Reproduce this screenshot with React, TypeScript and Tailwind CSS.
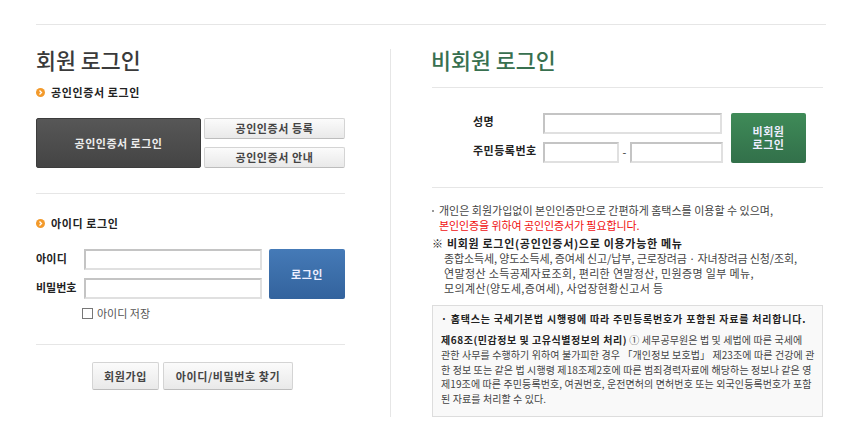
const inputCls = "border-2 border-[#e0e0e0] border-t-[#c4c4c4] border-l-[#c4c4c4] bg-white h-[21px] box-border";

function Bullet() {
  return (
    <svg width="9" height="9" viewBox="0 0 9 9" className="shrink-0">
      <circle cx="4.5" cy="4.5" r="4.5" fill="#f39a2b" />
      <path d="M3.5 2.5 L5.5 4.5 L3.5 6.5" fill="none" stroke="#fff" strokeWidth="1.3" />
    </svg>
  );
}

function SmallBtn({ children, w, h }: { children: React.ReactNode; w: string; h: string }) {
  return (
    <button className={`${w} ${h} flex items-center justify-center rounded-[2px] border border-[#d4d4d4] border-b-[#bdbdbd] bg-gradient-to-b from-[#fbfbfb] to-[#e9e9e9] text-[11px] font-bold tracking-[0.6px] text-[#444]`}>
      {children}
    </button>
  );
}

export default function App() {
  return (
    <div className="h-[434px] w-[850px] overflow-hidden bg-white pt-[24px] pl-[36px] text-[#333]" style={{ fontFamily: '"Noto Sans CJK KR", "Liberation Sans", sans-serif' }}>
      <div className="h-px w-[790px] bg-[#e6e6e6]" />
      <div className="mt-[24px] flex">
        {/* left */}
        <div className="w-[309px]">
          <h1 className="h-[23px] text-[21.7px] leading-[21px] font-medium text-[#3a3a3a]">회원 로그인</h1>
          <div className="mt-[10px] flex h-[20px] items-center gap-[6px] text-[11px] font-bold tracking-[0.6px] text-[#222]">
            <Bullet />공인인증서 로그인
          </div>
          <div className="mt-[16px] flex justify-between">
            <button className="flex h-[50px] w-[165px] items-center justify-center rounded-[2px] border border-[#3c3c3c] bg-gradient-to-b from-[#575757] to-[#444] text-[11px] font-bold tracking-[0.5px] text-[#eee]">
              공인인증서 로그인
            </button>
            <div className="flex w-[141px] flex-col gap-[8px]">
              <SmallBtn w="w-[141px]" h="h-[21px]">공인인증서 등록</SmallBtn>
              <SmallBtn w="w-[141px]" h="h-[21px]">공인인증서 안내</SmallBtn>
            </div>
          </div>
          <div className="mt-[25px] h-px bg-[#e6e6e6]" />
          <div className="mt-[19px] flex h-[20px] items-center gap-[6px] text-[11px] font-bold tracking-[0.6px] text-[#222]">
            <Bullet />아이디 로그인
          </div>
          <div className="mt-[16px] flex justify-between">
            <div className="flex flex-col gap-[8px]">
              <div className="flex items-center">
                <span className="w-[48px] pb-[3px] text-[11px] font-bold tracking-[0.2px] text-[#222]">아이디</span>
                <div className={`${inputCls} w-[178px]`} />
              </div>
              <div className="flex items-center">
                <span className="w-[48px] pb-[3px] text-[11px] font-bold text-[#222]">비밀번호</span>
                <div className={`${inputCls} w-[178px]`} />
              </div>
            </div>
            <button className="flex h-[50px] w-[76px] items-center justify-center rounded-[2px] bg-gradient-to-b from-[#457ab7] to-[#33639d] text-[11px] font-bold tracking-[0.5px] text-[#eef]">
              로그인
            </button>
          </div>
          <div className="mt-[7px] ml-[46px] flex h-[14px] items-center gap-[4px] text-[11px] text-[#555]">
            <span className="h-[11px] w-[11px] border border-[#777] bg-white" />아이디 저장
          </div>
          <div className="mt-[24px] h-px bg-[#e6e6e6]" />
          <div className="mt-[17px] flex justify-center gap-[4px] pl-[4px]">
            <SmallBtn w="w-[67px]" h="h-[28px]">회원가입</SmallBtn>
            <SmallBtn w="w-[130px]" h="h-[28px]">아이디/비밀번호 찾기</SmallBtn>
          </div>
        </div>
        <div className="ml-[45px] h-[368px] w-px bg-[#e6e6e6]" />
        {/* right */}
        <div className="ml-[41px] w-[391px]">
          <h1 className="-ml-[1px] h-[23px] text-[21.7px] leading-[21px] font-medium text-[#38704f]">비회원 로그인</h1>
          <div className="mt-[15px] h-px bg-[#e6e6e6]" />
          <div className="mt-[25px] flex">
            <div className="flex w-[111px] flex-col gap-[8px] pl-[41px] text-[11px] font-bold tracking-[0.5px] text-[#222]">
              <span className="h-[21px]">성명</span>
              <span className="h-[21px] whitespace-nowrap">주민등록번호</span>
            </div>
            <div className="flex w-[180px] flex-col gap-[8px]">
              <div className={`${inputCls} w-[179px]`} />
              <div className="flex items-center justify-between">
                <div className={`${inputCls} w-[76px]`} />
                <span className="text-[11px]">-</span>
                <div className={`${inputCls} w-[93px]`} />
              </div>
            </div>
            <button className="ml-[8px] flex h-[50px] w-[75px] items-center justify-center rounded-[2px] bg-gradient-to-b from-[#3f8b58] to-[#32704a] text-[11px] leading-[13px] font-bold tracking-[0.5px] text-[#eef]">
              비회원<br />로그인
            </button>
          </div>
          <div className="mt-[24px] h-px bg-[#e6e6e6]" />
          <div className="mt-[15px] flex gap-[5px] text-[11px] leading-[15px] whitespace-nowrap text-[#444]">
            <span className="mt-[7px] h-[2px] w-[2px] bg-[#999]" />
            <div>
              개인은 회원가입없이 본인인증만으로 간편하게 홈택스를 이용할 수 있으며,<br />
              <span className="tracking-[-0.1px] text-[#f01010]">본인인증을 위하여 공인인증서가 필요합니다.</span>
            </div>
          </div>
          <div className="mt-[3px] text-[11px] leading-[15px] font-bold tracking-[0.7px] whitespace-nowrap text-[#222]">※ 비회원 로그인(공인인증서)으로 이용가능한 메뉴</div>
          <div className="pl-[12px] text-[11px] leading-[15px] tracking-[0.35px] whitespace-nowrap text-[#444]">
            <span className="tracking-[-0.11px]">종합소득세, 양도소득세, 증여세 신고/납부, 근로장려금 · 자녀장려금 신청/조회,</span><br />
            연말정산 소득공제자료조회, 편리한 연말정산, 민원증명 일부 메뉴,<br />
            모의계산(양도세,증여세), 사업장현황신고서 등
          </div>
          <div className="mt-[9px] h-[112px] w-[391px] border border-[#ddd] bg-[#f9f9f9] px-[8px] pt-[5px] whitespace-nowrap">
            <div className="text-[10px] leading-[15px] font-bold tracking-[0.8px] text-[#222]">· 홈택스는 국세기본법 시행령에 따라 주민등록번호가 포함된 자료를 처리합니다.</div>
            <div className="mt-[7px] text-[10px] leading-[14.75px] tracking-[0.1px] text-[#444]">
              <b className="tracking-[0.55px] text-[#222]">제68조(민감정보 및 고유식별정보의 처리)</b> ① 세무공무원은 법 및 세법에 따른 국세에<br />
              관한 사무를 수행하기 위하여 불가피한 경우 「개인정보 보호법」 제23조에 따른 건강에 관<br />
              한 정보 또는 같은 법 시행령 제18조제2호에 따른 범죄경력자료에 해당하는 정보나 같은 영<br />
              제19조에 따른 주민등록번호, 여권번호, 운전면허의 면허번호 또는 외국인등록번호가 포함<br />
              된 자료를 처리할 수 있다.
            </div>
          </div>
        </div>
      </div>
    </div>
  );
}
